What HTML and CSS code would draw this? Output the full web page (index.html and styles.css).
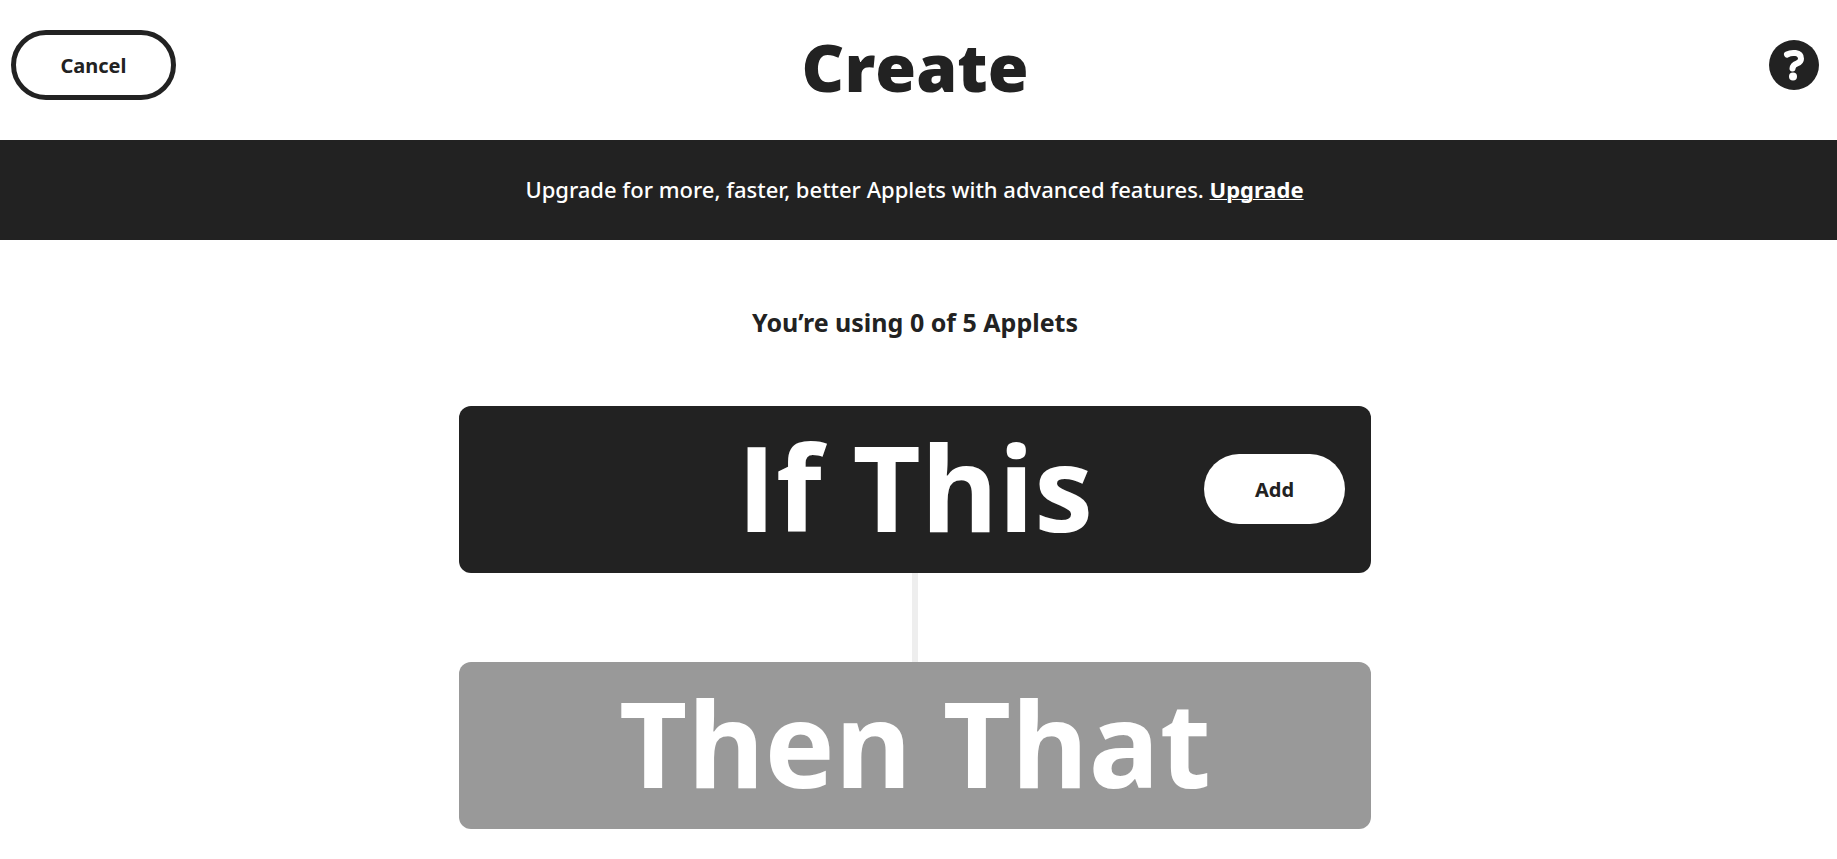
FILE: index.html
```html
<!DOCTYPE html>
<html lang="en">
<head>
  <meta charset="utf-8">
  <title>Create</title>
  <link rel="stylesheet" href="styles.css">
</head>
<body>
  <header class="header">
    <button class="button button-outline" type="button">Cancel</button>
    <h1 class="title">Create</h1>
    <button class="help" type="button" aria-label="Help">
      <svg class="help-icon" viewBox="0 0 50 50" aria-hidden="true">
        <circle cx="25" cy="25" r="25" fill="#222"/>
        <path d="M18 14.500C22 12.300 32 11.500 32 18.800C32 25 24 22 23.500 28.500" fill="none" stroke="#fff" stroke-width="6" stroke-linecap="round" stroke-linejoin="round"/>
        <circle cx="24" cy="36.500" r="4" fill="#fff"/>
      </svg>
    </button>
  </header>
  <aside class="banner">
    <p class="banner-text">Upgrade for more, faster, better Applets with advanced features. <a class="banner-link" href="#">Upgrade</a></p>
  </aside>
  <main class="main">
    <h2 class="usage">You’re using 0 of 5 Applets</h2>
    <section class="card card-active">
      <span class="card-label">If This</span>
      <button class="button button-add" type="button">Add</button>
    </section>
    <div class="connector"></div>
    <section class="card card-disabled">
      <span class="card-label">Then That</span>
    </section>
  </main>
</body>
</html>
```
FILE: styles.css
```css
* {
  box-sizing: border-box;
}

body {
  margin: 0;
  background: #fff;
  color: #222;
  font-family: "Avenir Next", "Noto Sans", sans-serif;
}

h1,
h2,
p {
  margin: 0;
}

.header {
  display: grid;
  grid-template-columns: 1fr auto 1fr;
  align-items: center;
  height: 140px;
  padding: 0 18px 10px 11px;
}

.title {
  padding-top: 2px;
  font-family: "Avenir Next", "Open Sans", sans-serif;
  font-size: 66px;
  font-weight: 800;
  line-height: 72px;
}

.button {
  height: 70px;
  padding: 0;
  border-radius: 35px;
  font-family: inherit;
  font-size: 20px;
  font-weight: 700;
  color: #222;
  background: #fff;
  cursor: pointer;
}

.button-outline {
  justify-self: start;
  width: 165px;
  border: 5px solid #222;
}

.help {
  justify-self: end;
  width: 50px;
  height: 50px;
  padding: 0;
  border: 0;
  background: none;
  cursor: pointer;
}

.help-icon {
  display: block;
  width: 100%;
  height: 100%;
}

.banner {
  padding: 33px 8px 35px 0;
  background: #222;
  color: #fff;
  text-align: center;
}

.banner-text {
  font-size: 22px;
  font-weight: 500;
  line-height: 32px;
}

.banner-link {
  color: inherit;
  font-weight: 700;
  text-decoration: underline;
  text-decoration-thickness: 1px;
}

.main {
  display: flex;
  flex-direction: column;
  align-items: center;
  padding: 64px 7px 30px 0;
}

.usage {
  margin-bottom: 66px;
  font-size: 25px;
  font-weight: 700;
  line-height: 36px;
}

.card {
  display: grid;
  grid-template-columns: 1fr auto 1fr;
  align-items: center;
  width: 100%;
  max-width: 912px;
  height: 167px;
  padding: 0 26px 1px;
  border-radius: 12px;
  color: #fff;
}

.card-active {
  background: #222;
}

.card-disabled {
  background: #999;
}

.card-label {
  grid-column: 2;
  padding-bottom: 4px;
  font-family: "Avenir Next", "Open Sans", sans-serif;
  font-size: 118px;
  font-weight: 700;
  line-height: 120px;
}

.button-add {
  justify-self: end;
  width: 141px;
  border: 0;
}

.connector {
  width: 6px;
  height: 89px;
  background: #eee;
}
```
